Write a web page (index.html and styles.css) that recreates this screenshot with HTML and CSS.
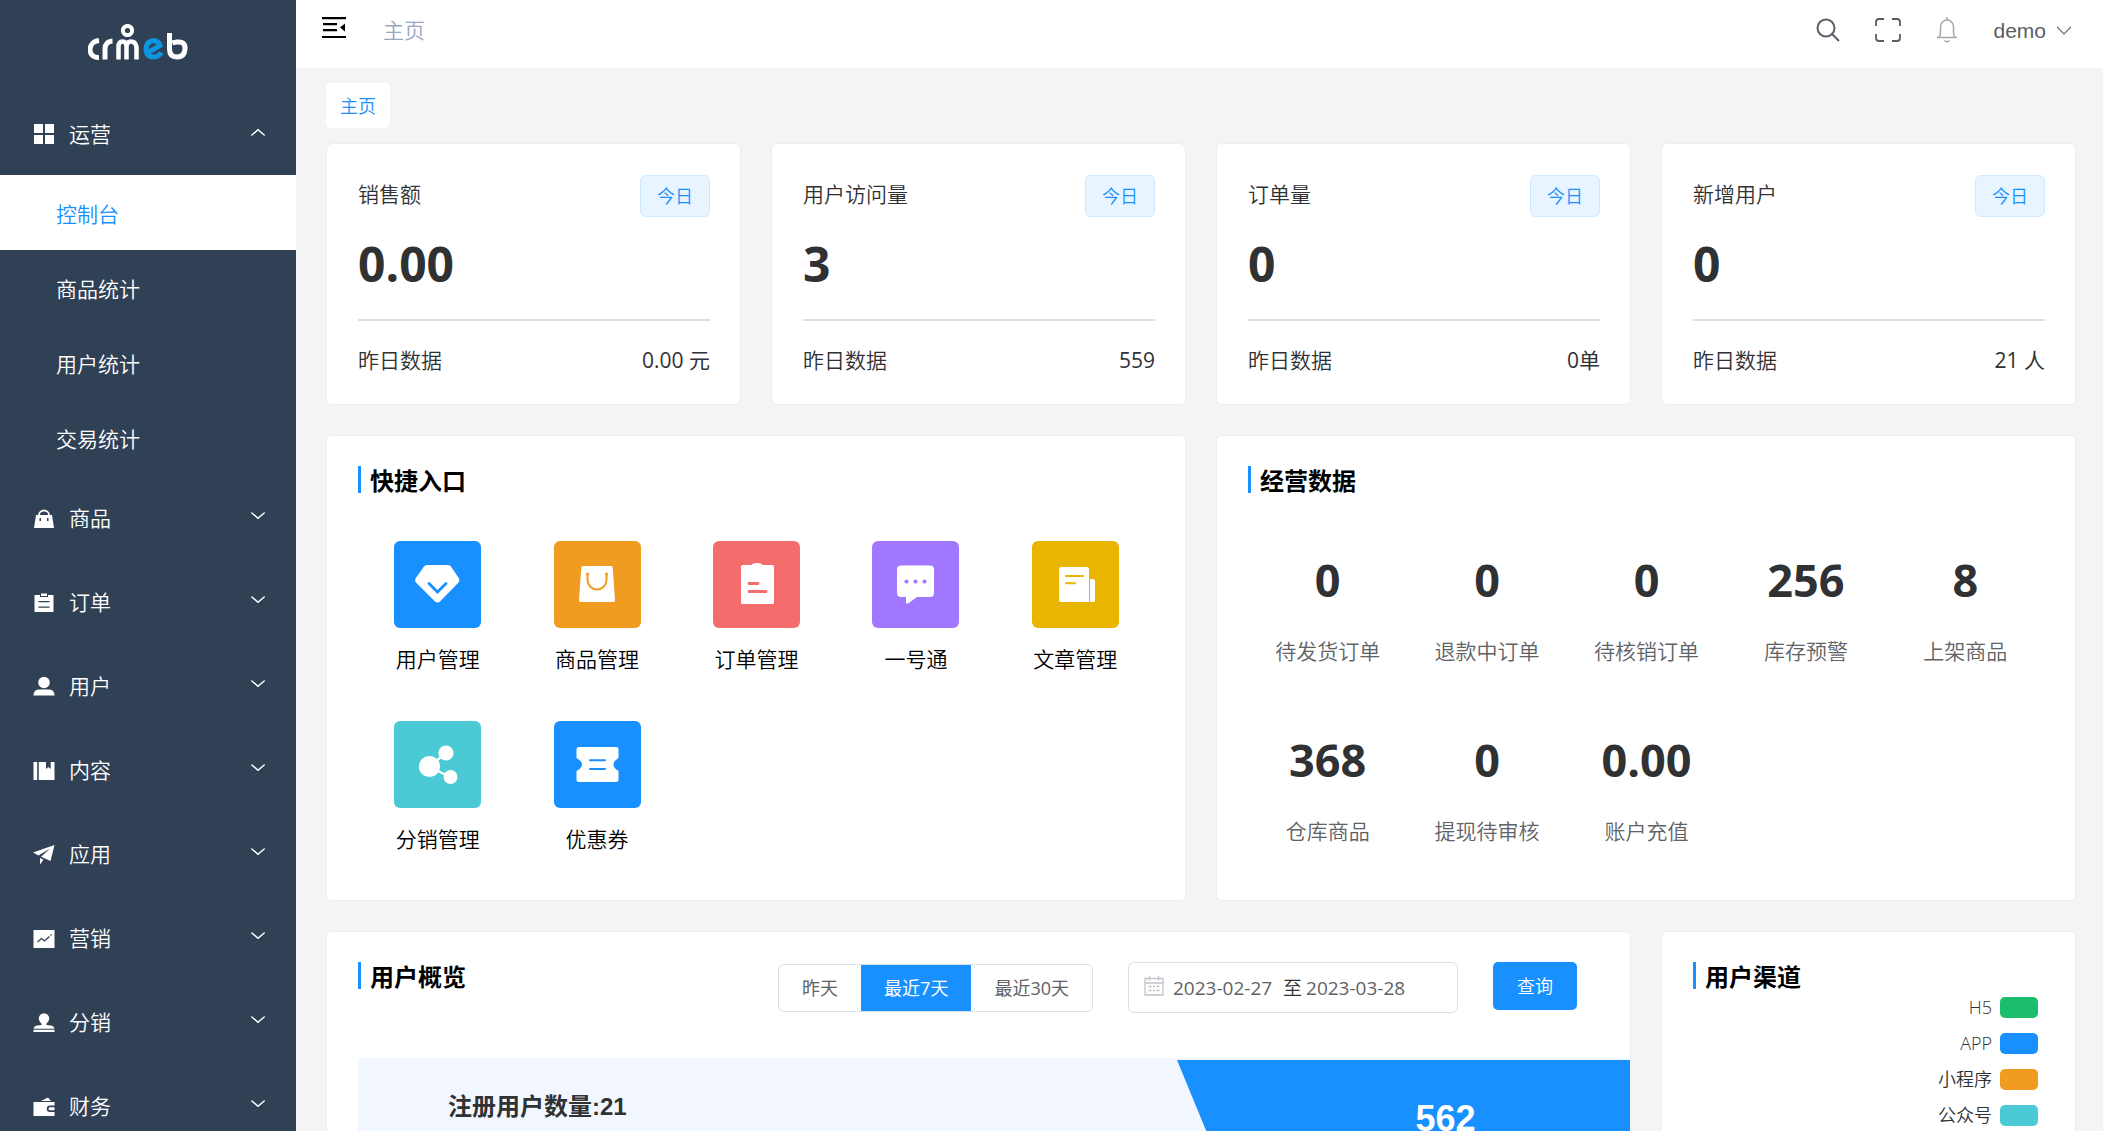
FILE: index.html
```html
<!DOCTYPE html>
<html lang="zh-CN">
<head>
<meta charset="utf-8">
<meta name="viewport" content="width=device-width, initial-scale=1">
<title>主页</title>
<link rel="stylesheet" href="styles.css">
</head>
<body>
<svg class="sprite" aria-hidden="true">
  <symbol id="down" viewBox="0 0 14 8"><path d="M.8 1 7 6.2 13.200 1" fill="none" stroke="currentColor" stroke-width="1.500" stroke-linecap="round"/></symbol>
</svg>
<div class="app">
  <aside class="side">
    <a class="logo" href="#" aria-label="crmeb">
      <svg width="101" height="38" viewBox="0 0 101 38" fill="none" stroke="#fff" stroke-width="5">
        <path d="M11 16.500C-1 18-1 34 11 33.500M17 35.500V25Q17 17.500 24.500 17"/>
        <path d="M30.500 35.500V23Q30.500 17.500 34.500 17.500T38.500 23V35.500M38.500 23Q38.500 17.500 43 17.500T48.500 23V35.500" stroke-width="4.500"/>
        <circle cx="39.500" cy="6.500" r="4.600" stroke-width="4"/>
        <path d="M60 28.500 72 21.500Q70 16 64.500 16.700 58 18 58 25.500 58.500 33 66 33 71 32.500 73.500 28.500" stroke="#0c95e0"/>
        <path d="M81.500 9V25Q81.500 33 89 33T97 25 89 18 83 21"/>
      </svg>
    </a>
    <nav>
      <button class="item"><svg viewBox="0 0 22 22"><path d="M1 1h9v9H1zM12 1h9v9h-9zM1 12h9v9H1zM12 12h9v9h-9z"/></svg><span>运营</span><svg class="arrow up"><use href="#down"/></svg></button>
      <a class="sub on" href="#">控制台</a>
      <a class="sub" href="#">商品统计</a>
      <a class="sub" href="#">用户统计</a>
      <a class="sub" href="#">交易统计</a>
      <button class="item"><svg viewBox="0 0 22 22"><path fill-rule="evenodd" d="M3 8h16l2 13H1zM6.500 11v3H8v-3zM14 11v3h1.500v-3z"/><path d="M6 8a5 4.500 0 0 1 10 0" fill="none" stroke="currentColor" stroke-width="1.800"/></svg><span>商品</span><svg class="arrow"><use href="#down"/></svg></button>
      <button class="item"><svg viewBox="0 0 22 22"><path fill-rule="evenodd" d="M1.500 4H7v2h8V4h5.500v17h-19zM5.500 10v1.300h11V10zM5.500 15.500v1.300h11v-1.300z"/><path d="M8 2.500h6V5H8z"/></svg><span>订单</span><svg class="arrow"><use href="#down"/></svg></button>
      <button class="item"><svg viewBox="0 0 22 22"><circle cx="11" cy="7.500" r="5.800"/><path d="M.5 20.500c0-5 3-6 6-6h9c3 0 6 1 6 6z"/></svg><span>用户</span><svg class="arrow"><use href="#down"/></svg></button>
      <button class="item"><svg viewBox="0 0 22 22"><path d="M.5 3h3.700v18H.5zM5.800 3H13v7l2.300-2 2.400 2V3h3.800v18H5.800z"/></svg><span>内容</span><svg class="arrow"><use href="#down"/></svg></button>
      <button class="item"><svg viewBox="0 0 22 22"><path d="M21.500 2 0 9.500l5.500 3L17 5.500 8 13.800 17.500 18zM7 15v6.500l3.500-4.800z"/></svg><span>应用</span><svg class="arrow"><use href="#down"/></svg></button>
      <button class="item"><svg viewBox="0 0 22 22"><path d="M.5 3h21v18H.5z"/><path d="m4.500 15 4-3.500 3 2.500 5-4.500m1-1 1-1" fill="none" stroke="#304156" stroke-width="1.300"/></svg><span>营销</span><svg class="arrow"><use href="#down"/></svg></button>
      <button class="item"><svg viewBox="0 0 22 22"><path d="M8.500 14c.8-2-2.700-3-2.700-6.500a5.200 5.200 0 0 1 10.400 0c0 3.500-3.500 4.500-2.700 6.500l5.500.7q2 .3 2.500 3H.5q.5-2.700 2.500-3zM.5 18.800h21V21H.5z"/></svg><span>分销</span><svg class="arrow"><use href="#down"/></svg></button>
      <button class="item"><svg viewBox="0 0 22 22"><path d="m8 6 7-3.500L18 6z"/><path fill-rule="evenodd" d="M.5 7h21v3.500H17a3.200 3.200 0 0 0 0 6.500h4.500v4H.5z"/><path d="M17 12.200h4.500v3H17a1.500 1.500 0 0 1 0-3z"/></svg><span>财务</span><svg class="arrow"><use href="#down"/></svg></button>
    </nav>
  </aside>
  <div class="page">
    <header class="top">
      <button class="icon fold" aria-label="折叠菜单"><svg width="24" height="22" viewBox="0 0 24 22"><path d="M0 1.200h24M1 7.200h14M1 13.200h14M0 20h24" stroke="#000" stroke-width="2.200"/><path d="m18 10.500 5-4v8z"/></svg></button>
      <span class="crumb">主页</span>
      <div class="tools">
        <button class="icon" aria-label="搜索"><svg width="24" height="24" viewBox="0 0 24 24" fill="none" stroke="#5a5e66" stroke-width="2"><circle cx="10" cy="10" r="8.500"/><path d="m16 16 7 7"/></svg></button>
        <button class="icon" aria-label="全屏"><svg width="26" height="24" viewBox="0 0 26 24" fill="none" stroke="#5a5e66" stroke-width="1.800"><path d="M1 8V4q0-3 3-3h5M17 1h5q3 0 3 3v4M25 16v4q0 3-3 3h-5M9 23H4q-3 0-3-3v-4"/></svg></button>
        <button class="icon" aria-label="通知"><svg width="22" height="26" viewBox="0 0 22 26" fill="none" stroke="#a5a7ab" stroke-width="1.500"><path d="M1 20.500h20M3 20.500q1.500-2 1.500-5V10a6.500 7 0 0 1 13 0v5.500q0 3 1.500 5M8.500 23.500q2.500 2.500 5 0M11 0v3"/></svg></button>
        <button class="user">demo <svg width="16" height="9" viewBox="0 0 16 9"><path d="m1 .8 7 7 7-7" fill="none" stroke="#606266" stroke-width="1.200"/></svg></button>
      </div>
    </header>
    <main class="main">
      <div class="tabs"><a class="tab" href="#">主页</a></div>
      <div class="grid">
        <section class="card kpi"><div class="row"><span>销售额</span><span class="tag">今日</span></div><strong>0.00</strong><div class="row foot"><span>昨日数据</span><span class="value">0.00 元</span></div></section>
        <section class="card kpi"><div class="row"><span>用户访问量</span><span class="tag">今日</span></div><strong>3</strong><div class="row foot"><span>昨日数据</span><span class="value">559</span></div></section>
        <section class="card kpi"><div class="row"><span>订单量</span><span class="tag">今日</span></div><strong>0</strong><div class="row foot"><span>昨日数据</span><span class="value">0单</span></div></section>
        <section class="card kpi"><div class="row"><span>新增用户</span><span class="tag">今日</span></div><strong>0</strong><div class="row foot"><span>昨日数据</span><span class="value">21 人</span></div></section>

        <section class="card half">
          <h2>快捷入口</h2>
          <div class="five links">
            <a href="#"><svg class="blue" viewBox="0 0 87 87"><path d="M33 24h21q2 0 3 1.500l8 12q1 2-.5 4L46 60.500q-2.500 2-5 0L22 41.500q-1.500-2-.5-4l8.500-12Q31 24 33 24z"/><path d="m35 42.500 8.500 8.500 8.500-8.500" class="cut"/></svg>用户管理</a>
            <a href="#"><svg class="orange" viewBox="0 0 87 87"><path d="M29 25h28q1.500 0 1.700 1.500L61 59q0 2-1.500 2h-33q-1.500 0-1.500-2l2.300-32.500Q27.500 25 29 25z"/><path d="M33.500 33v6a9.500 9.500 0 0 0 19 0v-6" class="cut thin"/><circle cx="33.500" cy="33" r="1.500" class="hole"/><circle cx="52.500" cy="33" r="1.500" class="hole"/></svg>商品管理</a>
            <a href="#"><svg class="red" viewBox="0 0 87 87"><path d="M29.500 24H38q2-2 6-2t6 2h9.500q1.500 0 1.500 1.500v36q0 1.500-1.500 1.500h-30q-1.500 0-1.500-1.500v-36q0-1.500 1.500-1.500z"/><path d="M36 42.500h9M36 50.500h17" class="cut"/></svg>订单管理</a>
            <a href="#"><svg class="purple" viewBox="0 0 87 87"><path d="M29 24.500h29q4 0 4 4V52q0 4-4 4H45l-9 6.500q-2 1-2-1V56h-5q-4 0-4-4V28.500q0-4 4-4z"/><g class="hole"><circle cx="34.500" cy="40.500" r="2.100"/><circle cx="43.500" cy="40.500" r="2.100"/><circle cx="52.500" cy="40.500" r="2.100"/></g></svg>一号通</a>
            <a href="#"><svg class="gold" viewBox="0 0 87 87"><path d="M29 26h26q2 0 2 2v33H29q-2 0-2-2V28q0-2 2-2zM58 38h3q2 0 2 2v19q0 2-2 2h-3z"/><path d="M34 35h17M34 42.200h9" class="cut thin"/></svg>文章管理</a>
            <a href="#"><svg class="teal" viewBox="0 0 87 87"><circle cx="35.500" cy="45.500" r="10.600"/><circle cx="52" cy="32" r="7.600"/><circle cx="56.500" cy="56" r="7"/><path d="m36 45 16-13M36 46l20 10" stroke="#fff" stroke-width="2.500"/></svg>分销管理</a>
            <a href="#"><svg class="blue" viewBox="0 0 87 87"><path d="M25 26h37q2.500 0 2.500 2.500V37q-5 3-5 6.500t5 6.500v8.500q0 2.500-2.500 2.500H25q-2.500 0-2.500-2.500V50q5.500-3 5.500-6.500T22.500 37v-8.500Q22.500 26 25 26z"/><path d="M36 39.200h15M36 48h15" class="cut thin"/></svg>优惠券</a>
          </div>
        </section>
        <section class="card half">
          <h2>经营数据</h2>
          <div class="five stats">
            <div><strong>0</strong>待发货订单</div>
            <div><strong>0</strong>退款中订单</div>
            <div><strong>0</strong>待核销订单</div>
            <div><strong>256</strong>库存预警</div>
            <div><strong>8</strong>上架商品</div>
            <div><strong>368</strong>仓库商品</div>
            <div><strong>0</strong>提现待审核</div>
            <div><strong>0.00</strong>账户充值</div>
          </div>
        </section>

        <section class="card wide">
          <div class="bar">
            <h2>用户概览</h2>
            <form class="filters">
              <div class="radios">
                <label><input type="radio" name="range">昨天</label>
                <label><input type="radio" name="range" checked>最近7天</label>
                <label><input type="radio" name="range">最近30天</label>
              </div>
              <div class="dates">
                <svg width="20" height="20" viewBox="0 0 20 20" fill="none" stroke="#c0c4cc" stroke-width="1.300"><path d="M1 2.500h18v16.500H1zM1 7h18M5.500 0v4.500M14.500 0v4.500M4.500 10.500h3m1.500 0h2m1.500 0h3M4.500 14.500h3m1.500 0h2m1.500 0h3"/></svg>
                <input aria-label="开始日期" value="2023-02-27"><span>至</span><input aria-label="结束日期" value="2023-03-28">
              </div>
              <button class="query" type="button">查询</button>
            </form>
          </div>
          <div class="funnel">
            <p>注册用户数量:21</p>
            <div class="shape"><span>562</span></div>
          </div>
        </section>
        <section class="card channel">
          <h2>用户渠道</h2>
          <ul>
            <li>H5<i class="green"></i></li>
            <li>APP<i class="blue"></i></li>
            <li>小程序<i class="orange"></i></li>
            <li>公众号<i class="teal"></i></li>
          </ul>
        </section>
      </div>
    </main>
  </div>
</div>
</body>
</html>
```
FILE: styles.css
```css
* { box-sizing: border-box; }
html, body { height: 100%; }
body {
  margin: 0;
  overflow: hidden;
  background: #f4f4f4;
  color: #303133;
  font: 350 21px/30px "Open Sans", "Noto Sans CJK SC", sans-serif;
}
button, input { font: inherit; color: inherit; }
button { border: 0; padding: 0; background: none; cursor: pointer; }
a { color: inherit; text-decoration: none; }
h2, p, ul { margin: 0; padding: 0; }
.sprite { display: none; }

.app { display: flex; height: 100vh; }

/* sidebar */
.side { flex: none; width: 296px; overflow: hidden; background: #304156; color: #fff; }
.logo { display: flex; height: 91px; padding: 24px 0 0 88px; }
.item { display: flex; align-items: center; width: 100%; height: 84px; padding: 2px 31px 0 33px; text-align: left; }
.item > svg { width: 22px; height: 22px; fill: currentColor; }
.item span { flex: 1; margin-left: 14px; }
.item .arrow { width: 14px; height: 8px; margin-bottom: 5px; }
.arrow.up { transform: rotate(180deg); }
.sub { display: flex; align-items: center; height: 75px; padding: 2px 0 0 56px; }
.sub.on { background: #fff; color: #1890ff; }

/* header */
.page { flex: 1; min-width: 0; overflow: hidden; }
.top { display: flex; align-items: center; height: 68px; padding: 0 31px 9px 26px; background: #fff; }
.icon { display: flex; }
.fold { padding-bottom: 3px; }
.crumb { margin-left: 37px; color: #97a8be; }
.tools { display: flex; align-items: center; gap: 35px; margin-left: auto; color: #5a5e66; }
.user { display: flex; align-items: center; gap: 10px; padding-top: 2px; font-family: "Liberation Sans", sans-serif; font-weight: 400; }

/* content */
.main { padding: 15px 27px 30px 30px; }
.tabs { display: flex; margin-bottom: 15px; }
.tab { padding: 8px 14px 7px; border-radius: 5px; background: #fff; color: #1890ff; font-size: 18px; }
.grid { display: grid; grid-template-columns: repeat(4, minmax(0, 1fr)); gap: 30px; }
.card { padding: 30px 30px 30px 31px; border: 1px solid #ebeef5; border-radius: 6px; background: #fff; }
.half { grid-column: span 2; }
.wide { grid-column: span 3; padding-right: 0; }

h2 { height: 27px; padding-left: 9px; border-left: 3px solid #1890ff; color: #000; font-size: 24px; font-weight: 700; line-height: 29px; }

.kpi { padding: 31px 30px 29px 31px; }
.row { display: flex; justify-content: space-between; align-items: flex-start; line-height: 38px; }
.kpi strong { display: block; padding: 17px 0 25px; font-size: 48px; font-weight: 700; line-height: 60px; }
.tag { padding: 0 16px; border: 1px solid #d1e9ff; border-radius: 6px; background: #e8f4ff; color: #1890ff; font-size: 18px; line-height: 40px; }
.foot { padding-top: 24px; border-top: 2px solid #dcdfe6; line-height: 30px; }
.value { font-weight: 400; }

.five { display: grid; grid-template-columns: repeat(5, minmax(0, 1fr)); text-align: center; }
.links { margin-top: 48px; padding-bottom: 16px; row-gap: 47px; }
.links a { display: block; color: #000; }
.links svg { display: block; width: 87px; height: 87px; margin: 0 auto 16px; border-radius: 6px; fill: #fff; }
.blue { background: #1890ff; color: #1890ff; }
.orange { background: #ef9c20; color: #ef9c20; }
.red { background: #f56c6c; color: #f56c6c; }
.purple { background: #a277ff; color: #a277ff; }
.gold { background: #e8b600; color: #e8b600; }
.teal { background: #4bcad5; color: #4bcad5; }
.green { background: #1bbe6b; }
.cut { fill: none; stroke: currentColor; stroke-width: 2.800; stroke-linecap: round; }
.cut.thin { stroke-width: 2; }
.hole { fill: currentColor; }

.stats { margin-top: 57px; row-gap: 64px; color: #606266; align-content: start; }
.stats strong { display: block; margin-bottom: 26px; color: #303133; font-size: 45px; font-weight: 700; line-height: 60px; }

/* overview */
.bar { display: flex; }
.filters { display: flex; align-items: flex-start; margin-left: auto; padding-right: 53px; color: #606266; font-size: 18px; }
.radios { display: flex; margin-top: 2px; border: 1px solid #dcdfe6; border-radius: 6px; overflow: hidden; font-weight: 400; }
.radios label { padding: 0 23px; line-height: 46px; }
.radios input { position: absolute; opacity: 0; }
.radios label:has(:checked) { background: #1890ff; color: #fff; }
.dates { display: flex; align-items: center; width: 330px; height: 51px; margin: 0 35px; padding-left: 15px; border: 1px solid #dcdfe6; border-radius: 6px; font-size: 19px; }
.dates svg { margin-bottom: 4px; }
.dates input { width: 110px; margin-left: 9px; padding: 0; border: 0; outline: 0; background: none; font-weight: 400; }
.dates span { color: #303133; }
.dates span + input { margin-left: 4px; }
.query { width: 84px; height: 48px; border-radius: 5px; background: #1890ff; color: #fff; }
.funnel { display: flex; height: 240px; margin-top: 45px; background: #f2f6fe; color: #303133; }
.funnel p { flex: 1; padding: 34px 0 0 90px; font-family: "Liberation Sans", "Noto Sans CJK SC", sans-serif; font-size: 24px; font-weight: 700; }
.shape { width: 453px; margin-top: 2px; padding: 41px 0 0 84px; background: #1890ff; clip-path: polygon(0 0, 100% 0, 100% 100%, 98px 100%); color: #fff; font: 700 36px/36px "Liberation Sans", sans-serif; text-align: center; }

.channel ul { list-style: none; font-size: 18px; }
.channel li { display: flex; justify-content: flex-end; align-items: center; gap: 8px; height: 36px; margin-right: 7px; }
.channel i { width: 38px; height: 21px; border-radius: 5px; }
```
